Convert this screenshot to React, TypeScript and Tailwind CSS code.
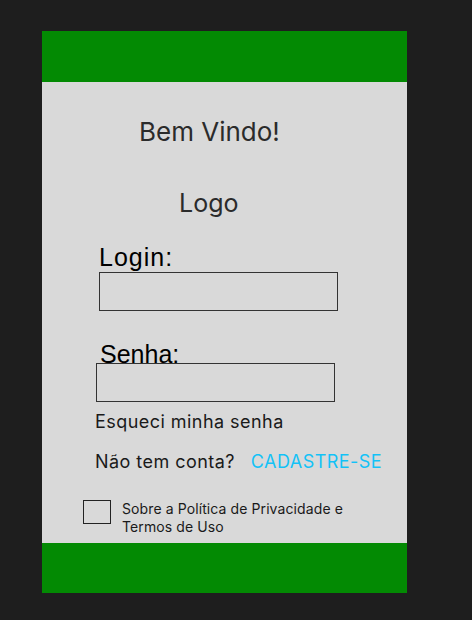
export default function App() {
  return (
    <div className="min-h-screen h-[620px] overflow-hidden bg-[#1e1e1e] pt-[31px] pl-[42px]">
      <div className="flex h-[562px] w-[365px] flex-col">
        <div className="h-[51px] bg-[#038a03]" />

        <div className="flex flex-1 flex-col bg-[#d9d9d9] font-['Inter',sans-serif]">
          <h1 className="mt-[34px] pl-[97px] text-[26px] leading-[32px] font-normal text-[#2b2b2b]">
            Bem Vindo!
          </h1>

          <p className="mt-[40px] pl-[137px] text-[25px] leading-[30px] text-[#2b2b2b]">
            Logo
          </p>

          <label className="mt-[25px] pl-[57px] font-['Liberation_Sans',Arial,sans-serif] text-[25px] leading-[29px] tracking-[1px] text-black">
            Login:
          </label>
          <div className="ml-[57px] h-[39px] w-[239px] border border-[#333]" />

          <label className="mt-[29px] pl-[58px] font-['Liberation_Sans',Arial,sans-serif] text-[25px] leading-[29px] text-black">
            Senha:
          </label>
          <div className="-mt-[6px] ml-[54px] h-[39px] w-[239px] border border-[#333]" />

          <p className="mt-[9px] pl-[53px] text-[18px] leading-[22px] tracking-[0.45px] text-[#1a1a1a]">
            Esqueci minha senha
          </p>

          <div className="mt-[18px] flex gap-[16px] pl-[53px] text-[18px] leading-[22px] tracking-[0.45px]">
            <span className="text-[#1a1a1a]">Não tem conta?</span>
            <span className="text-[#13c2f7]">CADASTRE-SE</span>
          </div>

          <div className="mt-[27px] flex items-start gap-[11px] pl-[41px]">
            <div className="h-[24px] w-[28px] shrink-0 border-[1.5px] border-[#222]" />
            <p className="w-[230px] text-[14px] leading-[18px] tracking-[0.1px] text-[#1a1a1a]">
              Sobre a Política de Privacidade e Termos de Uso
            </p>
          </div>
        </div>

        <div className="h-[50px] bg-[#038a03]" />
      </div>
    </div>
  );
}
